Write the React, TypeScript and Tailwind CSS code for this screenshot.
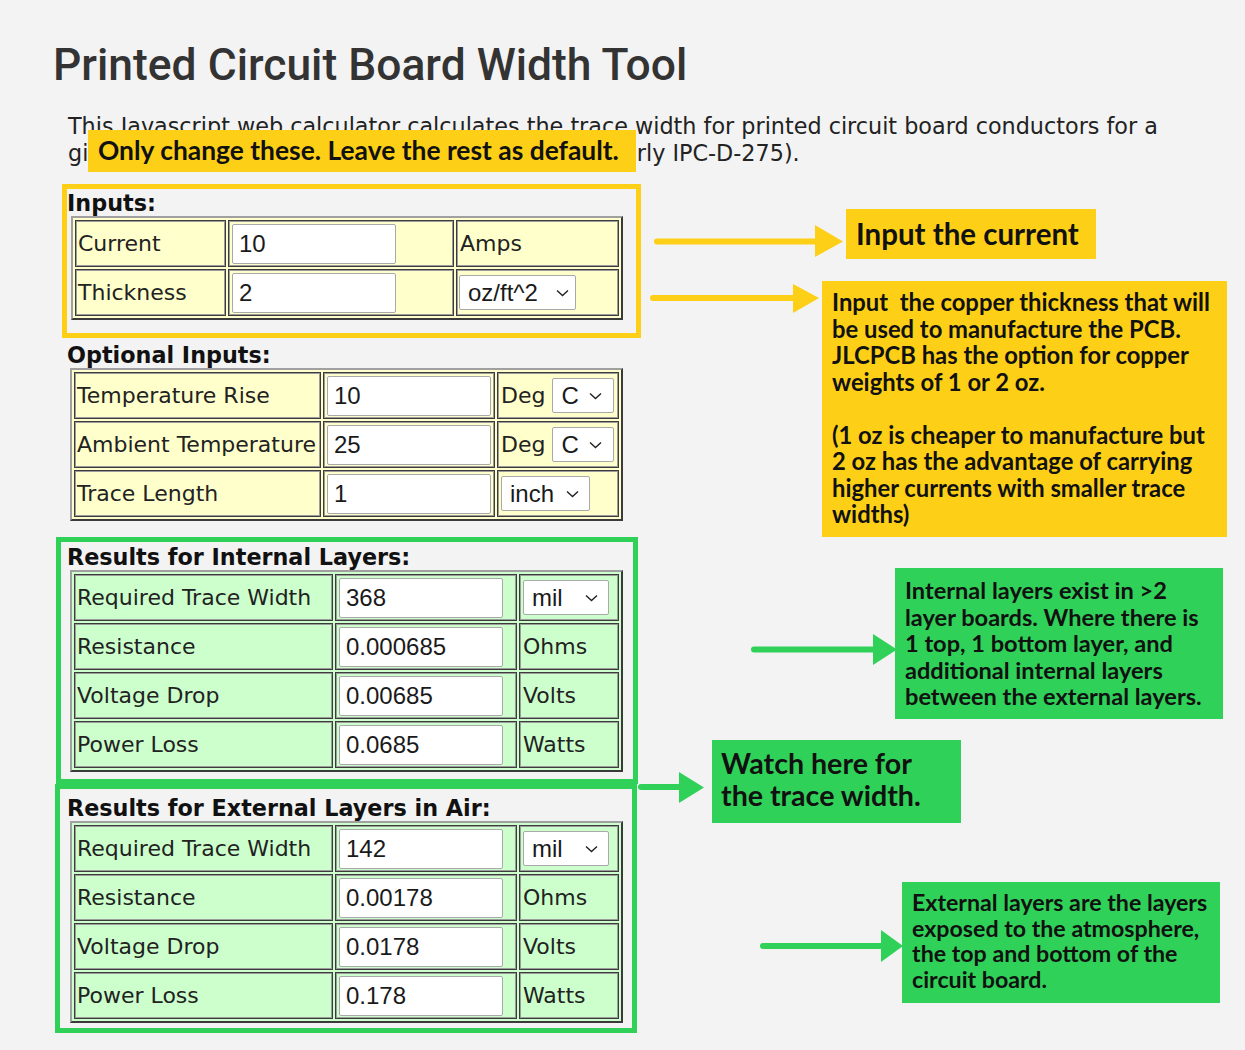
import React from 'react';

const V = "font-['DejaVu_Sans',Verdana,sans-serif]";
const A = "font-['Liberation_Sans',Arial,sans-serif]";
const NOTE = "font-['Lato','Open_Sans',sans-serif]";

function Chevron() {
  return (
    <svg width="13" height="8" viewBox="0 0 13 8" className="shrink-0">
      <path d="M1 1.5 L6.5 6.5 L12 1.5" fill="none" stroke="#222" strokeWidth="1.4" />
    </svg>
  );
}

function Table({ cols, bg, className = '', children }: { cols: string; bg: string; className?: string; children: React.ReactNode }) {
  return (
    <div
      className={`grid auto-rows-[47px] gap-[2px] border-2 border-t-[#a0a0a0] border-l-[#a0a0a0] border-r-[#3a3a3a] border-b-[#3a3a3a] p-[2px] ${cols} ${bg} ${className}`}
    >
      {children}
    </div>
  );
}

function Cell({ children }: { children?: React.ReactNode }) {
  return (
    <div className="flex min-w-0 items-center border border-[#3c3c3c] shadow-[inset_0_0_0_1px_#9c9c9c]">{children}</div>
  );
}

function Label({ text }: { text: string }) {
  return (
    <Cell>
      <span className={`whitespace-nowrap pl-[2px] text-[22px] text-[#222] ${V}`}>{text}</span>
    </Cell>
  );
}

function Field({ value }: { value: string }) {
  return (
    <Cell>
      <div
        className={`ml-[3px] flex h-[40px] w-[164px] items-center rounded-[2px] border border-[#a9a9a9] bg-white pl-[6px] text-[24px] text-[#1a1a1a] ${A}`}
      >
        {value}
      </div>
    </Cell>
  );
}

function Unit({ text }: { text: string }) {
  return (
    <Cell>
      <span className={`pl-[3px] text-[22px] text-[#222] ${V}`}>{text}</span>
    </Cell>
  );
}

function Select({ label, className }: { label: string; className: string }) {
  return (
    <div
      className={`flex h-[35px] shrink-0 items-center justify-between rounded-[2px] border border-[#a9a9a9] bg-white pl-[8px] text-[24px] text-[#1a1a1a] ${A} ${className}`}
    >
      <span>{label}</span>
      <Chevron />
    </div>
  );
}

function Heading({ text }: { text: string }) {
  return <h2 className={`h-[26px] whitespace-nowrap text-[22.3px] font-bold leading-[26px] text-[#111] ${V}`}>{text}</h2>;
}

function Results({ width, res, volt, loss }: { width: string; res: string; volt: string; loss: string }) {
  return (
    <Table cols="grid-cols-[259px_182px_1fr]" bg="bg-[#ccffcc]" className="ml-[3px] w-[553px]">
      <Label text="Required Trace Width" />
      <Field value={width} />
      <Cell>
        <Select label="mil" className="ml-[3px] w-[86px] pr-[10px]" />
      </Cell>
      <Label text="Resistance" />
      <Field value={res} />
      <Unit text="Ohms" />
      <Label text="Voltage Drop" />
      <Field value={volt} />
      <Unit text="Volts" />
      <Label text="Power Loss" />
      <Field value={loss} />
      <Unit text="Watts" />
    </Table>
  );
}

function Arrows() {
  const y = '#fdd017';
  const g = '#30d158';
  return (
    <svg className="pointer-events-none absolute left-0 top-0" width="1245" height="1050">
      <line x1="657" y1="241.5" x2="818" y2="241.5" stroke={y} strokeWidth="6" strokeLinecap="round" />
      <polygon points="815,225 843,241.5 815,257" fill={y} />
      <line x1="653" y1="298" x2="796" y2="298" stroke={y} strokeWidth="6" strokeLinecap="round" />
      <polygon points="793,284 819,298 793,313" fill={y} />
      <line x1="754" y1="649.5" x2="876" y2="649.5" stroke={g} strokeWidth="6" strokeLinecap="round" />
      <polygon points="873,634 897,649.5 873,665" fill={g} />
      <line x1="641" y1="787" x2="682" y2="787" stroke={g} strokeWidth="6" strokeLinecap="round" />
      <polygon points="679,772 704,787.5 679,803" fill={g} />
      <line x1="763" y1="946" x2="884" y2="946" stroke={g} strokeWidth="6" strokeLinecap="round" />
      <polygon points="881,930 903,946 881,962" fill={g} />
    </svg>
  );
}

export default function App() {
  return (
    <div className="relative h-[1050px] w-[1245px] overflow-hidden bg-[#f3f3f3]">
      <div className="flex flex-col items-start pt-[43px]">
        <h1 className="ml-[53px] whitespace-nowrap text-[44.4px] font-medium leading-[44px] text-[#333] font-['Roboto',sans-serif]">
          Printed Circuit Board Width Tool
        </h1>
        <p className={`ml-[68px] mt-[26px] whitespace-nowrap text-[22.3px] leading-[27px] text-[#222] ${V}`}>
          This Javascript web calculator calculates the trace width for printed circuit board conductors for a
          <br />
          given current using formulas from IPC-2221 (formerly IPC-D-275).
        </p>

        <section className="ml-[62px] mt-[17px] w-[579px] border-[5px] border-[#fdd017] pb-[13px] pt-[1px]">
          <Heading text="Inputs:" />
          <Table cols="grid-cols-[151px_226px_1fr]" bg="bg-[#ffffcc]" className="ml-[4px] w-[552px]">
            <Label text="Current" />
            <Field value="10" />
            <Unit text="Amps" />
            <Label text="Thickness" />
            <Field value="2" />
            <Cell>
              <Select label="oz/ft^2" className="ml-[2px] w-[117px] pr-[6px]" />
            </Cell>
          </Table>
        </section>

        <section className="ml-[67px] mt-[4px]">
          <Heading text="Optional Inputs:" />
          <Table cols="grid-cols-[247px_172px_1fr]" bg="bg-[#ffffcc]" className="ml-[3px] w-[553px]">
            <Label text="Temperature Rise" />
            <Field value="10" />
            <Cell>
              <span className={`pl-[3px] text-[22px] text-[#222] ${V}`}>Deg</span>
              <Select label="C" className="ml-[7px] w-[62px] pr-[11px]" />
            </Cell>
            <Label text="Ambient Temperature" />
            <Field value="25" />
            <Cell>
              <span className={`pl-[3px] text-[22px] text-[#222] ${V}`}>Deg</span>
              <Select label="C" className="ml-[7px] w-[62px] pr-[11px]" />
            </Cell>
            <Label text="Trace Length" />
            <Field value="1" />
            <Cell>
              <Select label="inch" className="ml-[3px] w-[89px] pr-[10px]" />
            </Cell>
          </Table>
        </section>

        <section className="ml-[56px] mt-[16px] w-[582px] border-[5px] border-[#30d158] pb-[7px] pl-[6px] pt-[2px]">
          <Heading text="Results for Internal Layers:" />
          <Results width="368" res="0.000685" volt="0.00685" loss="0.0685" />
        </section>

        <section className="ml-[55px] w-[582px] border-[5px] border-[#30d158] pb-[5px] pl-[7px] pt-[6px]">
          <Heading text="Results for External Layers in Air:" />
          <Results width="142" res="0.00178" volt="0.0178" loss="0.178" />
        </section>

        <div className="ml-[67px] mt-[13px]">
          <Heading text="Notes:" />
        </div>
      </div>

      <Arrows />

      <div
        className={`absolute left-[88px] top-[130px] flex h-[42px] w-[548px] items-center whitespace-nowrap bg-[#fdd017] pl-[10px] text-[26.4px] font-bold text-[#111] ${NOTE}`}
      >
        Only change these. Leave the rest as default.
      </div>

      <div
        className={`absolute left-[846px] top-[209px] flex h-[50px] w-[250px] items-center whitespace-nowrap bg-[#fdd017] pl-[10px] text-[29.5px] font-bold text-[#111] ${NOTE}`}
      >
        Input the current
      </div>

      <div
        className={`absolute left-[822px] top-[281px] h-[256px] w-[405px] whitespace-nowrap bg-[#fdd017] pl-[10px] pt-[8px] text-[23.8px] font-bold leading-[26.5px] text-[#111] ${NOTE}`}
      >
        Input{'\u00a0'} the copper thickness that will
        <br />
        be used to manufacture the PCB.
        <br />
        JLCPCB has the option for copper
        <br />
        weights of 1 or 2 oz.
        <br />
        <br />
        (1 oz is cheaper to manufacture but
        <br />
        2 oz has the advantage of carrying
        <br />
        higher currents with smaller trace
        <br />
        widths)
      </div>

      <div
        className={`absolute left-[895px] top-[568px] h-[151px] w-[328px] whitespace-nowrap bg-[#30d158] pl-[10px] pt-[9px] text-[23.6px] font-bold leading-[26.5px] text-[#111] ${NOTE}`}
      >
        Internal layers exist in &gt;2
        <br />
        layer boards. Where there is
        <br />
        1 top, 1 bottom layer, and
        <br />
        additional internal layers
        <br />
        between the external layers.
      </div>

      <div
        className={`absolute left-[712px] top-[740px] h-[83px] w-[249px] whitespace-nowrap bg-[#30d158] pl-[9px] pt-[7px] text-[28.6px] font-bold leading-[32px] text-[#111] ${NOTE}`}
      >
        Watch here for
        <br />
        the trace width.
      </div>

      <div
        className={`absolute left-[902px] top-[882px] h-[121px] w-[318px] whitespace-nowrap bg-[#30d158] pl-[10px] pt-[8px] text-[23.2px] font-bold leading-[25.5px] text-[#111] ${NOTE}`}
      >
        External layers are the layers
        <br />
        exposed to the atmosphere,
        <br />
        the top and bottom of the
        <br />
        circuit board.
      </div>
    </div>
  );
}
